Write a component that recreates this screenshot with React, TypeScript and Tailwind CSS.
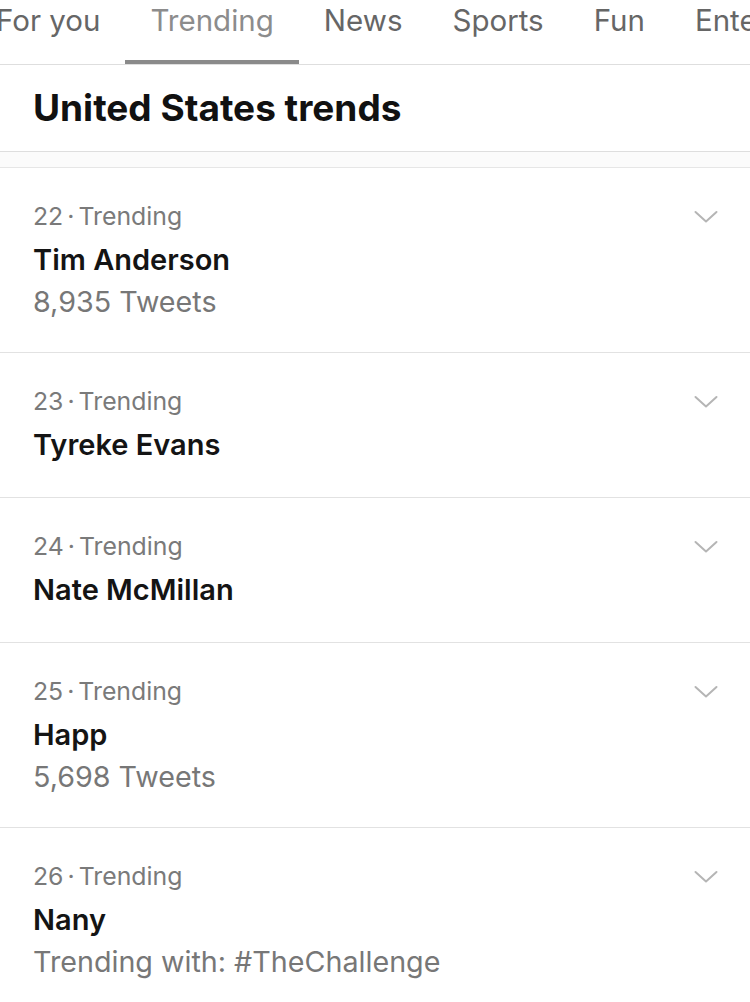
import React from "react";

type Trend = { rank: number; name: string; sub?: string };

const trends: Trend[] = [
  { rank: 22, name: "Tim Anderson", sub: "8,935 Tweets" },
  { rank: 23, name: "Tyreke Evans" },
  { rank: 24, name: "Nate McMillan" },
  { rank: 25, name: "Happ", sub: "5,698 Tweets" },
  { rank: 26, name: "Nany", sub: "Trending with: #TheChallenge" },
];

const Chevron = () => (
  <svg width="26" height="16" viewBox="0 0 26 16" fill="none" className="mt-[10px]">
    <path d="M2.5 3 L13 12.5 L23.5 3" stroke="#b5b5b5" strokeWidth="2" strokeLinecap="round" strokeLinejoin="round" />
  </svg>
);

export default function App() {
  const tabs = ["For you", "Trending", "News", "Sports", "Fun", "Entertainment"];
  return (
    <div className="w-[750px] h-[1002px] overflow-hidden bg-white font-['Inter','Noto_Sans',sans-serif]">
      <div className="h-[65px] border-b border-[#dedede] flex overflow-hidden">
        <div className="flex -ml-[29px] shrink-0">
          {tabs.map((t) => {
            const active = t === "Trending";
            return (
              <div key={t} className="relative px-[25px] shrink-0 h-[64px] flex items-start">
                <span
                  className={`text-[29.5px] leading-[40px] whitespace-nowrap ${
                    active ? "text-[#8c8c8c]" : "text-[#666666]"
                  }`}
                >
                  {t}
                </span>
                {active && <div className="absolute left-0 right-0 bottom-0 h-[4px] bg-[#8a8a8a]" />}
              </div>
            );
          })}
        </div>
      </div>
      <div className="h-[87px] flex items-center pl-[33px] border-b border-[#dedede]">
        <h1 className="text-[37px] font-bold text-[#111111]">United States trends</h1>
      </div>
      <div className="h-[16px] bg-[#fbfbfb] border-b border-[#e6e6e6]" />
      {trends.map((tr) => (
        <div key={tr.rank} className="flex justify-between border-b border-[#e2e2e2] pl-[33px] pr-[31px] pt-[31px] pb-[30px]">
          <div className="flex flex-col">
            <div className="text-[24.8px] leading-[34px] text-[#7a7a7a]">
              {tr.rank}
              <span className="mx-[4px]">·</span>Trending
            </div>
            <div className="mt-[5px] text-[29px] leading-[44px] font-semibold text-[#141414]">{tr.name}</div>
            {tr.sub && <div className="text-[28.7px] leading-[40px] text-[#777777]">{tr.sub}</div>}
          </div>
          <Chevron />
        </div>
      ))}
    </div>
  );
}
